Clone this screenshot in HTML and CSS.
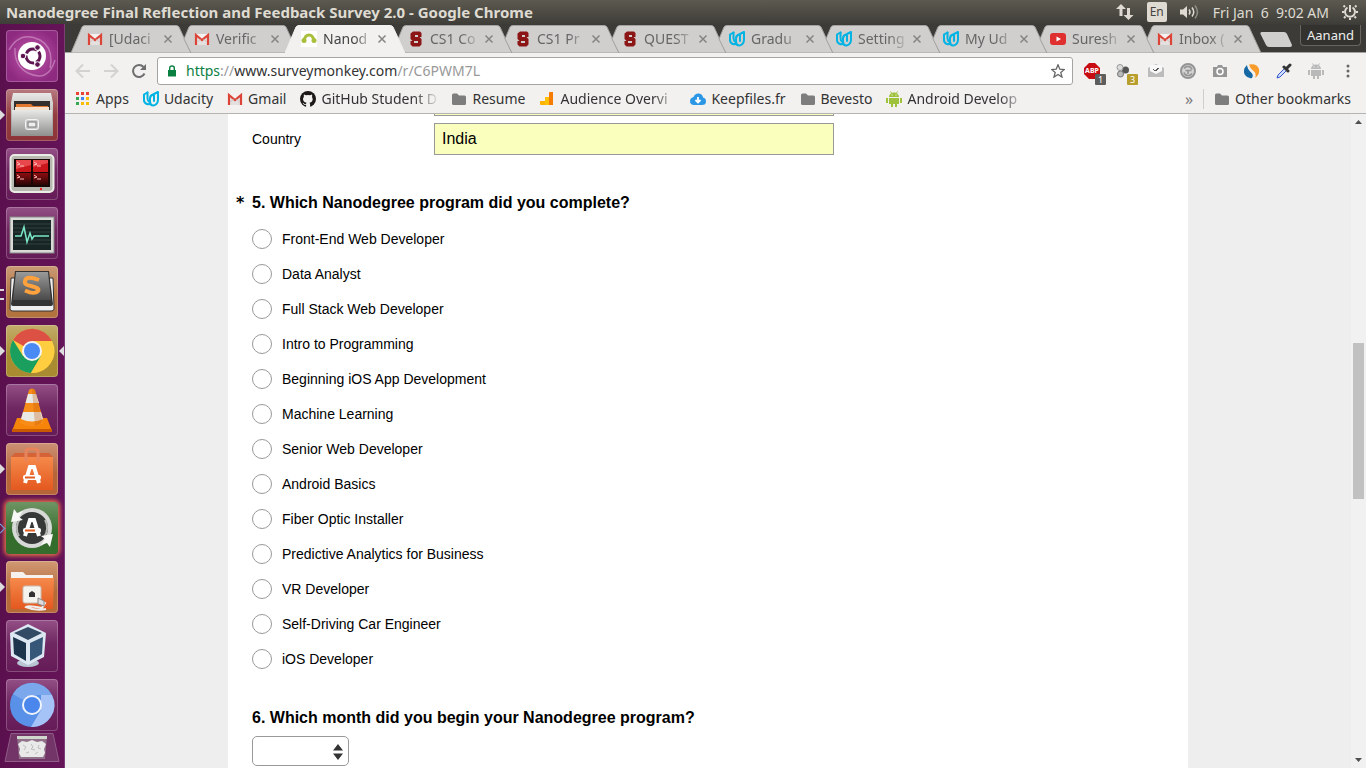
FILE: index.html
```html
<!DOCTYPE html>
<html lang="en">
<head>
<meta charset="utf-8">
<title>Nanodegree Final Reflection and Feedback Survey 2.0</title>
<link rel="stylesheet" href="styles.css">
</head>
<body>
<svg class="defs" aria-hidden="true">
  <defs>
    <linearGradient id="metal" x1="0" y1="0" x2="0" y2="1"><stop offset="0" stop-color="#e8e8e6"/><stop offset="1" stop-color="#8f8f8d"/></linearGradient>
    <linearGradient id="orange" x1="0" y1="0" x2="0" y2="1"><stop offset="0" stop-color="#f58a4b"/><stop offset="1" stop-color="#e4581f"/></linearGradient>
    <linearGradient id="redpane" x1="0" y1="0" x2="0" y2="1"><stop offset="0" stop-color="#8d0d10"/><stop offset="1" stop-color="#2a0505"/></linearGradient>
    <linearGradient id="keycap" x1="0" y1="0" x2="0" y2="1"><stop offset="0" stop-color="#9a9a9a"/><stop offset="1" stop-color="#4a4a4a"/></linearGradient>
  </defs>
  <symbol id="tab-full" viewBox="0 0 120 28" preserveAspectRatio="none"><path d="M0 28L11 2Q12 .5 14 .5H105Q107 .5 108 2L120 28Z"/></symbol>
  <symbol id="tab-cut" viewBox="0 0 120 28" preserveAspectRatio="none"><path d="M6 14L11 2Q12 .5 14 .5H105Q107 .5 108 2L120 28H13Z"/></symbol>
  <symbol id="gmail" viewBox="0 0 16 16"><path d="M1 3h14v11H1z" fill="#f4f1ef"/><path d="M3 5v9h10V5L8 9z" fill="#e4e0df"/><path d="M2 14V4l6 5 6-5v10" fill="none" stroke="#db4437" stroke-width="2.200"/><path d="M3.500 11l3-3M12.500 11l-3-3" stroke="#c9c5c4"/></symbol>
  <symbol id="udacity" viewBox="0 0 16 16"><g fill="none" stroke="#02b3e4" stroke-width="2" stroke-linecap="round" stroke-linejoin="round"><path d="M4.500 1.500L1 3.500v5.500q0 3 3 4 2 .7 3.500-1"/><path d="M4.500 1.500v5.500q0 3 2 4"/><path d="M10 3.500q-3 1-3 4v3.500q0 3.500 3.500 3.500 4.500-1 4.500-6V1l-4 2v7"/></g></symbol>
  <symbol id="stanford" viewBox="0 0 16 16"><path d="M5 .5h7l1.500 1.500V6H10V4H7v2h4.500l2 2v5.500l-2 2h-7l-2-2V10H6v2h4V10H4.500l-2-2V2.500z" fill="#8c1515"/></symbol>
  <symbol id="folder" viewBox="0 0 16 16"><path d="M1 4q0-1.500 1.500-1.500H6l2 2h5.500Q15 4.500 15 6v6.500q0 1.500-1.500 1.500h-11Q1 14 1 12.500z" fill="#7d7d7d"/></symbol>
  <symbol id="close" viewBox="0 0 10 10"><path d="M1.500 1.500l7 7M8.500 1.500l-7 7" fill="none" stroke="currentColor" stroke-width="1.500"/></symbol>
  <symbol id="android" viewBox="0 0 16 16"><path d="M3 6a5 4.500 0 0 1 10 0z"/><path d="M5.500 2L4.500.5M10.500 2l1-1.500" stroke="currentColor"/><path d="M3 7h10v6H3zM0 7h2v5H0zM14 7h2v5h-2zM5 13h2v3H5zM9 13h2v3H9z"/><path d="M5.500 4h1M9.500 4h1" stroke="#fff"/></symbol>
</svg>

<div class="desktop">
  <header class="panel">
    <h1 class="panel-title">Nanodegree Final Reflection and Feedback Survey 2.0 - Google Chrome</h1>
    <div class="indicators">
      <svg width="18" height="16" viewBox="0 0 18 16" fill="#dfdbd2"><path d="M5 0l5 5H6.500v7h-3V5H0zM12.500 16l-5-5H11V4h3v7h3.500z"/></svg>
      <span class="lang">En</span>
      <svg width="20" height="16" viewBox="0 0 20 16"><path d="M0 5.500h3L7 2v12l-4-3.500H0z" fill="#dfdbd2"/><g fill="none" stroke="#dfdbd2" stroke-width="1.500"><path d="M9 5.500q2 2.500 0 5M12 3.500q3.500 4.500 0 9"/><path d="M15 1.500q5 6.500 0 13" opacity=".45"/></g></svg>
      <time class="clock">Fri Jan&nbsp; 6&nbsp; 9:02 AM</time>
      <svg width="16" height="16" viewBox="0 0 16 16" fill="none" stroke="#dfdbd2"><path d="M5.500 3.500a5 5 0 1 0 5 0M8 1v7" stroke-width="2"/><path d="M3 3L1.500 1.500M13 3l1.500-1.500M2 8H0M14 8h2M3.500 12.500L2 14M12.500 12.500L14 14M8 14v2" stroke-width="2"/></svg>
    </div>
  </header>

  <nav class="launcher" aria-label="Launcher">
    <button class="tile ubuntu" aria-label="Dash"><svg viewBox="0 0 52 52"><g fill="none" stroke="#d79bcb" stroke-width="1.500" opacity=".6"><path d="M3 20Q14 0 34 10Q48 18 44 38M49 30Q42 53 22 43Q8 36 9 18"/></g><circle cx="26" cy="26" r="14" fill="#fff"/><circle cx="27" cy="26" r="7" fill="none" stroke="#5e1451" stroke-width="3" stroke-dasharray="12.700 2" stroke-dashoffset="5"/><g fill="#5e1451" stroke="#fff"><circle cx="17" cy="26" r="2.800"/><circle cx="31.500" cy="17.500" r="2.800"/><circle cx="31.500" cy="34.500" r="2.800"/></g></svg></button>
    <button class="tile files run" aria-label="Files"><svg viewBox="0 0 52 52"><path d="M7 4h38l2 10v33H5V14z" fill="url(#metal)"/><path d="M8 12h36v12H8z" fill="#33302d"/><path d="M10 15h15l2 2h15v6H10z" fill="#e37931"/><path d="M9 18h34v3H9z" fill="#f6e2cc"/><path d="M6 21h40v26H6z" fill="url(#metal)"/><rect x="19.500" y="30.500" width="13" height="10" rx="2" fill="#ccc" stroke="#f4f4f4"/><rect x="22" y="33" width="8" height="5" fill="#eee" stroke="#777"/></svg></button>
    <button class="tile" aria-label="Terminator"><svg viewBox="0 0 52 52"><rect x="4.500" y="7" width="43" height="37" rx="4" fill="#b7b9b0" stroke="#ecece6" stroke-width="2"/><path d="M8 11h36v28H8z" fill="#180707"/><path d="M10 12h15v12H10zM27 12h15v12H27z" fill="#c9171c"/><path d="M10 25h15v12H10zM27 25h15v12H27z" fill="url(#redpane)"/><path d="M10 12h15v5l-15 4zM27 12h15v3l-15 4z" fill="#e8484b"/><path d="M11 14l3 2-3 1M14 18h4M28 14l3 2-3 1M31 18h4M11 27l3 2-3 1M14 31h4M28 27l3 2-3 1M31 31h4" stroke="#ffb9b9" fill="none"/><circle cx="35" cy="41" r="1.200" fill="#e22"/></svg></button>
    <button class="tile" aria-label="System Monitor"><svg viewBox="0 0 52 52"><rect x="4" y="10" width="44" height="36" fill="#d9dad7" stroke="#888"/><path d="M7 13h38v30H7z" fill="#172524"/><path d="M7 17h38M7 21h38M7 25h38M7 33h38M7 37h38" stroke="#304340"/><path d="M9 29h6l3-9 3 15 3-9 2 6 2-3h15" fill="none" stroke="#7be8c6" stroke-width="1.500"/></svg></button>
    <button class="tile sublime run2" aria-label="Sublime Text"><svg viewBox="0 0 52 52"><path d="M5 12l-1 31q0 2 3 2h38q3 0 3-2l-1-31z" fill="#eee" stroke="#333"/><path d="M9 5h34l4 33q0 2-2 2H7q-2 0-2-2z" fill="#333"/><path d="M10 6h32l3 28H7z" fill="url(#keycap)"/><path d="M33 14q-13-5-14 1-1 4 6 5 9 2 7 5-3 4-13-.5" fill="none" stroke="#ffa13c" stroke-width="4"/></svg></button>
    <button class="tile chrome run focus" aria-label="Google Chrome"><svg viewBox="0 0 52 52"><circle cx="26" cy="26" r="22" fill="#ffcd40"/><path d="M26 26L7 15A22 22 0 0 1 46 16H26z" fill="#dd5144"/><path d="M7 15A22 22 0 0 0 25 48L35 31 26 26 17 31z" fill="#1b9f5f"/><path d="M46 16A22 22 0 0 1 25 48L35 31V16z" fill="#ffcd40"/><circle cx="26" cy="26" r="10" fill="#f4f4f4"/><circle cx="26" cy="26" r="8" fill="#4a8af4"/></svg></button>
    <button class="tile" aria-label="VLC"><svg viewBox="0 0 52 52"><path d="M11 34h30l5 13H6z" fill="#f58408"/><path d="M6 45h40v3H6z" fill="#c95a02"/><path d="M14 39L23 6q3-3 6 0l9 33q-12 7-24 0z" fill="#f78d18"/><path d="M22 10h8l3 9H19.500zM17 28h18l2 7q-11 5-22 0z" fill="#e9e9e5"/><path d="M26 5q3 0 3.500 2L36 35q1 5-7 7z" fill="#c25507" opacity=".3"/></svg></button>
    <button class="tile software run" aria-label="Software"><svg viewBox="0 0 52 52"><path d="M5 14h42v33H5z" fill="url(#orange)"/><path d="M5 14l4-4h34l4 4" fill="#d66237"/><path d="M20 18V9q0-3 3-3h6q3 0 3 3v9" fill="none" stroke="#e8845c" stroke-width="3"/><path d="M19 40l5-16h4l5 16" fill="none" stroke="#fff" stroke-width="4"/><rect x="17" y="32" width="18" height="5" rx="2" fill="#fff"/><path d="M19 34.500h10" stroke="#e15f23" stroke-width="2"/></svg></button>
    <button class="tile updater hollow" aria-label="Software Updater"><svg viewBox="0 0 52 52"><circle cx="26" cy="26" r="20" fill="#d7d9d6"/><circle cx="26" cy="26" r="16" fill="#373938"/><path d="M14 17A15 15 0 0 0 13 34M38 35A15 15 0 0 0 39 18" fill="none" stroke="#b5b8b4" stroke-width="2"/><path d="M5 20L8 7l3 4 6-2-4 6 4 3zM47 32l-3 13-3-4-6 2 4-6-4-3z" fill="#f8f8f6"/><path d="M19 34l5-16h4l5 16" fill="none" stroke="#fff" stroke-width="4"/><rect x="17" y="26" width="18" height="5" rx="2" fill="#fff"/><path d="M19 28.500h10" stroke="#e15f23" stroke-width="2"/></svg></button>
    <button class="tile network run" aria-label="Network folder"><svg viewBox="0 0 52 52"><path d="M5 11h12l3 3h27v9H5z" fill="#f6f1ec"/><path d="M4 17h44l-1 31H5z" fill="url(#orange)"/><rect x="17" y="25" width="18" height="17" rx="2" fill="#f4f3ee" stroke="#c9c0b7"/><path d="M23 36v-4l3-2 3 2v4z" fill="#333"/><path d="M34 39l5 3-3 5q-14-3-16-1 9 4 20 2" fill="none" stroke="#eee" stroke-width="2"/><path d="M32 37l6 3v5l-6-2z" fill="#ddd" stroke="#888"/></svg></button>
    <button class="tile" aria-label="VirtualBox"><svg viewBox="0 0 52 52"><ellipse cx="22" cy="43" rx="11" ry="4" fill="#b8c6d4"/><path d="M22 4l18 9-2 24-16 8L5 36 4 13z" fill="#dce7f2"/><path d="M22 7l14 6-14 7L8 13z" fill="#324a64"/><path d="M7 17l13 6v18L8 34z" fill="#1d344d"/><path d="M37 17l-13 6v18l12-7z" fill="#365777"/></svg></button>
    <button class="tile" aria-label="Chromium"><svg viewBox="0 0 52 52"><circle cx="26" cy="26" r="22" fill="#5a91e8"/><path d="M26 26L7 15A22 22 0 0 1 46 16H26z" fill="#7ba8ec"/><path d="M46 16A22 22 0 0 1 25 48L35 31V16z" fill="#a5c3f6"/><circle cx="26" cy="26" r="10" fill="#f0f4fb"/><circle cx="26" cy="26" r="8" fill="#4a86ec"/></svg></button>
    <button class="trash" aria-label="Trash"><svg viewBox="0 0 56 29"><path d="M7 .5h42l6 28H1z" fill="#733568" stroke="#8e5c86"/><path d="M13 3h30l-2 23H15z" fill="#a39aa0" opacity=".6"/><path d="M14 11l4-3 5 1 5-2 5 2 5-1 4 3-2 5 1 4-2 4H17l-2-4 1-4z" fill="#e9e9e9"/><path d="M19 12l3 2-2 3M27 11l2 3-2 2 4 1M35 12l-1 3 3 1M22 20l3-1M31 21l3-2" stroke="#bdbdbd" fill="none"/><path d="M13 4.500h30" stroke="#d2d7cd" stroke-width="3"/></svg></button>
  </nav>

  <div class="browser">
    <div class="tabstrip">
      <div class="tabs">
        <div class="tab"><svg class="shape"><use href="#tab-full"/></svg><svg class="icon"><use href="#gmail"/></svg><span class="tab-title">[Udaci</span><button class="x" aria-label="Close"><svg><use href="#close"/></svg></button></div>
        <div class="tab"><svg class="shape"><use href="#tab-cut"/></svg><svg class="icon"><use href="#gmail"/></svg><span class="tab-title">Verific</span><button class="x" aria-label="Close"><svg><use href="#close"/></svg></button></div>
        <div class="tab active"><svg class="shape"><use href="#tab-full"/></svg><svg class="icon" viewBox="0 0 16 16"><path d="M0 0h16v16H0z" fill="#fff"/><path d="M3 10Q4 4 8 4t5 6" fill="none" stroke="#a9bf3c" stroke-width="2.800"/><circle cx="3" cy="9.500" r="2.500" fill="#a9bf3c"/><circle cx="13" cy="9.500" r="2.500" fill="#a9bf3c"/></svg><span class="tab-title">Nanod</span><button class="x" aria-label="Close"><svg><use href="#close"/></svg></button></div>
        <div class="tab"><svg class="shape"><use href="#tab-cut"/></svg><svg class="icon"><use href="#stanford"/></svg><span class="tab-title">CS1 Co</span><button class="x" aria-label="Close"><svg><use href="#close"/></svg></button></div>
        <div class="tab"><svg class="shape"><use href="#tab-cut"/></svg><svg class="icon"><use href="#stanford"/></svg><span class="tab-title">CS1 Pr</span><button class="x" aria-label="Close"><svg><use href="#close"/></svg></button></div>
        <div class="tab"><svg class="shape"><use href="#tab-cut"/></svg><svg class="icon"><use href="#stanford"/></svg><span class="tab-title">QUEST</span><button class="x" aria-label="Close"><svg><use href="#close"/></svg></button></div>
        <div class="tab"><svg class="shape"><use href="#tab-cut"/></svg><svg class="icon"><use href="#udacity"/></svg><span class="tab-title">Gradu</span><button class="x" aria-label="Close"><svg><use href="#close"/></svg></button></div>
        <div class="tab"><svg class="shape"><use href="#tab-cut"/></svg><svg class="icon"><use href="#udacity"/></svg><span class="tab-title">Setting</span><button class="x" aria-label="Close"><svg><use href="#close"/></svg></button></div>
        <div class="tab"><svg class="shape"><use href="#tab-cut"/></svg><svg class="icon"><use href="#udacity"/></svg><span class="tab-title">My Ud</span><button class="x" aria-label="Close"><svg><use href="#close"/></svg></button></div>
        <div class="tab"><svg class="shape"><use href="#tab-cut"/></svg><svg class="icon" viewBox="0 0 16 16"><rect y="2" width="16" height="12" rx="3" fill="#e02f2f"/><path d="M6.500 5.500v5L11 8z" fill="#fff"/></svg><span class="tab-title">Suresh</span><button class="x" aria-label="Close"><svg><use href="#close"/></svg></button></div>
        <div class="tab"><svg class="shape"><use href="#tab-cut"/></svg><svg class="icon"><use href="#gmail"/></svg><span class="tab-title">Inbox (</span><button class="x" aria-label="Close"><svg><use href="#close"/></svg></button></div>
      </div>
      <button class="newtab" aria-label="New tab"><svg width="32" height="15" viewBox="0 0 32 15"><path d="M2 0h22q2 0 3 2l5 11q0 2-2 2H9q-2 0-3-2L.5 2Q0 0 2 0z" fill="#d0cfce"/></svg></button>
      <button class="profile">Aanand</button>
    </div>

    <div class="toolbar">
      <button class="nav" aria-label="Back"><svg width="16" height="16" viewBox="0 0 16 16"><path d="M8 1.500L1.500 8 8 14.500M2 8h13" class="dim"/></svg></button>
      <button class="nav" aria-label="Forward"><svg width="16" height="16" viewBox="0 0 16 16"><path d="M8 1.500L14.500 8 8 14.500M14 8H1" class="dim"/></svg></button>
      <button class="nav" aria-label="Reload"><svg width="16" height="16" viewBox="0 0 16 16"><path d="M13.500 10.500A6 6 0 1 1 12.500 4" fill="none" stroke="#6e6e6e" stroke-width="2"/><path d="M15 1v6H9z" fill="#6e6e6e"/></svg></button>
      <div class="omnibox">
        <svg width="8" height="12" viewBox="0 0 8 12"><path d="M0 5h8v6.500H0z" fill="#0b8043"/><path d="M1.700 6V3q0-2 2.300-2t2.300 2v3" fill="none" stroke="#0b8043" stroke-width="1.400"/></svg>
        <div class="url"><span class="secure">https</span><span class="faint">://</span>www.surveymonkey.com<span class="faint">/r/C6PWM7L</span></div>
        <button class="nav" aria-label="Bookmark"><svg width="14" height="14" viewBox="0 0 14 14"><path d="M7 .8l1.800 4.400 4.600.3-3.600 3 1.200 4.600-4-2.600-4 2.600 1.200-4.600-3.600-3 4.600-.3z" fill="none" stroke="#666" stroke-width="1.300"/></svg></button>
      </div>
      <div class="extensions">
        <button class="ext" aria-label="Ad blocker"><svg viewBox="0 0 16 16"><path d="M5 0h6l5 5v6l-5 5H5l-5-5V5z" fill="#c70d12"/></svg><span class="abp">ABP</span><span class="badge">1</span></button>
        <button class="ext" aria-label="Blocked trackers"><svg viewBox="0 0 16 16"><circle cx="9.500" cy="7" r="3.500" fill="#555"/><circle cx="4" cy="4.500" r="3" fill="#ddd" stroke="#999"/><circle cx="4.500" cy="11" r="3" fill="#bbb" stroke="#777"/></svg><span class="badge gold">3</span></button>
        <button class="ext" aria-label="Mail"><svg viewBox="0 0 16 16"><path d="M0 5l8-4 8 4v9H0z" fill="#bbb"/><path d="M2 2h12v7l-6 3-6-3z" fill="#f7f7f7"/><path d="M5 6l2 2 3-3M8 8l3-3" fill="none" stroke="#555"/><path d="M0 7l8 4 8-4v7H0z" fill="#bcbcbc"/></svg></button>
        <button class="ext" aria-label="Sync"><svg viewBox="0 0 16 16"><circle cx="8" cy="8" r="7" fill="#d4d4d4" stroke="#949494" stroke-width="2"/><path d="M12 10.500a4.500 4.500 0 0 1-8-1M4 5.500a4.500 4.500 0 0 1 8 1M5.500 7.500h6M8 7.500v3.500" fill="none" stroke="#949494" stroke-width="1.600"/></svg></button>
        <button class="ext" aria-label="Camera"><svg viewBox="0 0 16 16"><path d="M1 4h4l1-2h4l1 2h4v10H1z" fill="#969696"/><circle cx="8" cy="8.500" r="3" fill="none" stroke="#fff" stroke-width="1.500"/></svg></button>
        <button class="ext" aria-label="Similar pages"><svg viewBox="0 0 16 16"><path d="M3 2q-5 5-2 10 3 4 7 3 2-3-1-6T3 2z" fill="#1769a5"/><path d="M5 1.500Q13 0 15 6q1 6-4 9 2-5-2-7.500-3-2-4-6z" fill="#f89c2b"/><path d="M4 1.500q0 5 4 7.500 3 3 2 6.500" fill="none" stroke="#f2f1f0" stroke-width="1.500"/></svg></button>
        <button class="ext" aria-label="Colour picker"><svg viewBox="0 0 16 16"><path d="M1 15l1-3 7-7 2 2-7 7z" fill="#cfdcff" stroke="#3558c8"/><path d="M8 4l4 4M10 6l4-4" stroke="#333" stroke-width="3" stroke-linecap="round"/></svg></button>
        <button class="ext grey-android" aria-label="Android"><svg><use href="#android"/></svg></button>
        <button class="ext menu" aria-label="Menu"><svg viewBox="0 0 16 16" fill="#666"><circle cx="8" cy="3" r="1.500"/><circle cx="8" cy="8" r="1.500"/><circle cx="8" cy="13" r="1.500"/></svg></button>
      </div>
    </div>

    <nav class="bookmarks" aria-label="Bookmarks">
      <a href="#apps"><svg class="icon" viewBox="0 0 16 16"><path d="M1 1h3v3H1zM6 1h3v3H6zM11 1h3v3h-3z" fill="#ea4335"/><path d="M1 6h3v3H1zM1 11h3v3H1z" fill="#34a853"/><path d="M6 6h3v3H6z" fill="#4285f4"/><path d="M6 11h3v3H6zM11 6h3v3h-3zM11 11h3v3h-3z" fill="#fbbc05"/></svg><span>Apps</span></a>
      <a href="#udacity-link"><svg class="icon"><use href="#udacity"/></svg><span>Udacity</span></a>
      <a href="#gmail-link"><svg class="icon"><use href="#gmail"/></svg><span>Gmail</span></a>
      <a href="#github"><svg class="icon" viewBox="0 0 16 16"><circle cx="8" cy="8" r="8" fill="#1b1817"/><path d="M4 3.500l2 .7q2-.5 4 0l2-.7q.5 1.500 0 2.500 1.300 2 .3 4-1 1.500-2.800 1.700.6.600.6 1.600V16h-4v-2q-2 .3-2.800-1.300l-.9-1q1.300 0 1.800 1 .8.800 1.900.3 0-1 .4-1.300Q3 11 3 8q0-1 .9-2-.4-1 .1-2.500z" fill="#f2f1f0"/></svg><span class="fade">GitHub Student D</span></a>
      <a href="#resume"><svg class="icon"><use href="#folder"/></svg><span>Resume</span></a>
      <a href="#audience"><svg class="icon" viewBox="0 0 16 16"><path d="M10 2q0-1 1-1h3v13h-4z" fill="#f57c00"/><path d="M6 6h4v8H6z" fill="#ffc107"/><path d="M1 10h5v4H2q-1 0-1-1z" fill="#ffb300"/></svg><span class="fade">Audience Overvi</span></a>
      <a href="#keepfiles"><svg class="icon" viewBox="0 0 16 16"><path d="M4 14q-4 0-4-4 0-3 3.500-4Q5 2 9 2.500q3.500.5 4 4 3 .5 3 4 0 3.500-4 3.500z" fill="#2e97e5"/><path d="M8 6v5M5.500 9L8 11.500 10.500 9" fill="none" stroke="#fff" stroke-width="1.800"/></svg><span>Keepfiles.fr</span></a>
      <a href="#bevesto"><svg class="icon"><use href="#folder"/></svg><span>Bevesto</span></a>
      <a href="#android-link"><svg class="icon green-android"><use href="#android"/></svg><span class="fade">Android Develop</span></a>
      <button class="more" aria-label="More bookmarks">»</button>
      <a class="other" href="#other"><svg class="icon"><use href="#folder"/></svg><span>Other bookmarks</span></a>
    </nav>

    <div class="viewport">
      <main class="survey">
        <form>
          <div class="field clipped"><input type="text" aria-label="ZIP"></div>
          <div class="field"><label for="country">Country</label><input id="country" type="text" value="India"></div>

          <fieldset>
            <legend><span class="star">*</span>5. Which Nanodegree program did you complete?</legend>
            <label class="option"><input type="radio" name="program">Front-End Web Developer</label>
            <label class="option"><input type="radio" name="program">Data Analyst</label>
            <label class="option"><input type="radio" name="program">Full Stack Web Developer</label>
            <label class="option"><input type="radio" name="program">Intro to Programming</label>
            <label class="option"><input type="radio" name="program">Beginning iOS App Development</label>
            <label class="option"><input type="radio" name="program">Machine Learning</label>
            <label class="option"><input type="radio" name="program">Senior Web Developer</label>
            <label class="option"><input type="radio" name="program">Android Basics</label>
            <label class="option"><input type="radio" name="program">Fiber Optic Installer</label>
            <label class="option"><input type="radio" name="program">Predictive Analytics for Business</label>
            <label class="option"><input type="radio" name="program">VR Developer</label>
            <label class="option"><input type="radio" name="program">Self-Driving Car Engineer</label>
            <label class="option"><input type="radio" name="program">iOS Developer</label>
          </fieldset>

          <div class="question">
            <label class="heading" for="month">6. Which month did you begin your Nanodegree program?</label>
            <div class="select">
              <select id="month"><option></option></select>
              <svg width="10" height="16" viewBox="0 0 10 16" fill="#333"><path d="M5 0l5 6.500H0zM5 16l5-6.500H0z"/></svg>
            </div>
          </div>
        </form>
      </main>
      <div class="scrollbar">
        <svg width="7" height="4" viewBox="0 0 7 4"><path d="M3.500 0L7 4H0z" fill="#505050"/></svg>
        <div class="track"><div class="thumb"></div></div>
        <svg width="7" height="4" viewBox="0 0 7 4"><path d="M3.500 4L7 0H0z" fill="#505050"/></svg>
      </div>
    </div>
  </div>
</div>
</body>
</html>
```
FILE: styles.css
```css
* { box-sizing: border-box; }

body {
  margin: 0;
  font-family: "Noto Sans", "Open Sans", sans-serif;
  font-size: 14px;
  color: #333;
}

button {
  padding: 0;
  border: 0;
  background: none;
  font: inherit;
  color: inherit;
}

svg { display: block; flex: none; }
.defs { position: absolute; width: 0; height: 0; }
.icon { width: 16px; height: 16px; }

.desktop {
  display: grid;
  grid-template: 24px minmax(0, 1fr) / 65px minmax(0, 1fr);
  height: 100vh;
  overflow: hidden;
  background: #3c3b37;
}

/* Top panel */
.panel {
  grid-column: 1 / -1;
  display: flex;
  align-items: center;
  justify-content: space-between;
  padding: 0 8px 0 6px;
  background: linear-gradient(#5c5a50, #3e3d38);
  color: #dfdbd2;
}
.panel-title { margin: 0; font-size: 15px; line-height: 20px; font-weight: 700; white-space: nowrap; }
.indicators { display: flex; align-items: center; gap: 13px; }
.lang {
  width: 20px;
  border-radius: 2px;
  background: #dfdbd2;
  color: #45433d;
  font-size: 12px;
  line-height: 20px;
  text-align: center;
}
.clock { white-space: nowrap; }

/* Launcher */
.launcher {
  display: flex;
  flex-direction: column;
  align-items: center;
  gap: 7px;
  padding-top: 6px;
  border-right: 1px solid #7c3d72;
  background: linear-gradient(90deg, #5b104e, #651457);
  overflow: hidden;
}
.tile {
  position: relative;
  flex: none;
  width: 52px;
  height: 52px;
  border-radius: 4px;
  background: linear-gradient(#935086, #702862 45%, #651b57);
  box-shadow: inset 0 0 0 1px rgba(255, 255, 255, .22);
}
.ubuntu { background: radial-gradient(#c05aae, #8e2a80 75%); }
.files { background: linear-gradient(#b77b80, #943d41 50%, #8c3438); }
.sublime { background: linear-gradient(#c99a76, #b3733f 60%); }
.chrome { background: linear-gradient(#c3ad6b, #a98c31 60%); }
.software { background: linear-gradient(#cd9175, #b66438 60%); }
.updater { background: linear-gradient(#6f9465, #356e2c 60%); box-shadow: 0 0 4px 2px #e5704a; }
.network { background: linear-gradient(#d09974, #b56a38 60%); }
.run::before, .run2::before, .focus::after, .hollow::before {
  content: "";
  position: absolute;
  left: -6px;
  top: 21px;
  border: 5px solid transparent;
  border-left-color: #ddd;
  border-right-width: 0;
}
.run2::before { top: 23px; width: 4px; height: 7px; border: solid #ddd; border-width: 2px 0; }
.hollow::before { width: 6px; height: 6px; top: 23px; left: -9px; border: solid #6fa5d8; border-width: 1px 1px 0 0; transform: rotate(45deg); }
.focus::after { left: auto; right: -6px; border-width: 5px 5px 5px 0; border-right-color: #ddd; }
.trash { width: 56px; margin-top: -5px; }

/* Tab strip */
.browser { display: flex; flex-direction: column; min-width: 0; min-height: 0; }
.tabstrip {
  display: flex;
  align-items: flex-start;
  padding: 1px 5px 0 6px;
  background: #3c3b37;
  border-bottom: 1px solid #a3a2a0;
}
.tabs { display: flex; flex: 0 1 1190px; min-width: 0; margin-bottom: -1px; }
.tab {
  position: relative;
  flex: 1 1 0;
  display: flex;
  align-items: center;
  gap: 6px;
  min-width: 0;
  height: 28px;
  padding: 0 18px 0 16px;
  margin-left: -13px;
  color: #666;
}
.tab:first-child { margin-left: 0; }
.tab > :not(.shape) { position: relative; }
.shape {
  position: absolute;
  inset: 0;
  width: 100%;
  height: 100%;
  fill: #d0cfce;
  stroke: #a3a2a0;
}
.active { z-index: 1; color: #444; }
.active .shape { fill: #f2f1f0; stroke: #f2f1f0; }
.tab-title {
  flex: 1;
  min-width: 0;
  overflow: hidden;
  white-space: nowrap;
  line-height: 20px;
  mask-image: linear-gradient(90deg, #000 65%, rgba(0, 0, 0, .15));
}
.x { color: #858483; }
.x svg { width: 10px; height: 10px; }
.newtab { margin: 7px 0 0 -1px; }
.profile {
  margin-left: auto;
  width: 61px;
  border: 1px solid #67655e;
  border-top: 0;
  border-radius: 0 0 4px 4px;
  background: #33322f;
  color: #eee;
  font-size: 13px;
  line-height: 20px;
}

/* Toolbar */
.toolbar {
  display: flex;
  align-items: center;
  padding: 4px 10px 0 10px;
  gap: 12px;
  background: #f2f1f0;
}
.dim { fill: none; stroke: #d3d2d1; stroke-width: 2; }
.omnibox {
  flex: 1;
  display: flex;
  align-items: center;
  height: 28px;
  margin-left: -2px;
  padding: 0 7px 0 10px;
  gap: 10px;
  border: 1px solid #a5a4a3;
  border-radius: 3px;
  background: #fff;
}
.url { flex: 1; white-space: nowrap; line-height: 20px; }
.secure { color: #0b8043; }
.faint { color: #999; }
.extensions { display: flex; gap: 16px; margin-left: -1px; }
.ext { position: relative; width: 16px; height: 16px; }
.ext svg { width: 16px; height: 16px; }
.abp {
  position: absolute;
  inset: 0;
  color: #fff;
  font-size: 7px;
  font-weight: 700;
  line-height: 16px;
  text-align: center;
}
.badge {
  position: absolute;
  left: 11px;
  top: 11px;
  width: 11px;
  border-radius: 1px;
  background: #5d5d5d;
  color: #fff;
  font-size: 9px;
  line-height: 11px;
  text-align: center;
}
.gold { background: #b89f2d; }
.grey-android { color: #b9b9b9; fill: #b9b9b9; }
.green-android { color: #9fc23c; fill: #9fc23c; }

/* Bookmarks bar */
.bookmarks {
  display: flex;
  align-items: center;
  gap: 14px;
  height: 29px;
  padding: 0 15px 0 10px;
  border-bottom: 1px solid #b5b4b3;
  background: #f2f1f0;
}
.bookmarks a {
  display: flex;
  align-items: center;
  gap: 5px;
  color: #333;
  text-decoration: none;
  white-space: nowrap;
  line-height: 20px;
}
.fade {
  width: 116px;
  overflow: hidden;
  mask-image: linear-gradient(90deg, #000 80%, rgba(0, 0, 0, .1));
}
.more { margin-left: auto; color: #777; font-size: 16px; line-height: 20px; }
.bookmarks .other { border-left: 1px solid #cfcecd; padding-left: 10px; margin-left: -4px; }

/* Survey page */
.viewport { flex: 1; display: flex; min-height: 0; overflow: hidden; background: #eee; }
.survey {
  flex: 0 1 960px;
  margin: 0 auto;
  padding: 0 24px;
  background: #fff;
  color: #000;
  font-family: "Liberation Sans", Arial, sans-serif;
  font-size: 14px;
  overflow: hidden;
}
.field { display: flex; align-items: center; margin-bottom: 7px; }
.field label { width: 182px; }
.field input {
  width: 400px;
  height: 32px;
  padding: 0 7px;
  border: 1px solid #999;
  background: #faffbd;
  font: 16px/20px "Liberation Sans", Arial, sans-serif;
  color: #000;
}
.clipped { margin-top: -30px; padding-left: 182px; }
fieldset { margin: 38px 0 0; padding: 0; border: 0; }
legend, .heading {
  display: block;
  margin-bottom: 8px;
  padding: 0;
  font-size: 16px;
  line-height: 20px;
  font-weight: 700;
}
.star { display: inline-block; width: 16px; margin-left: -16px; font-family: "DejaVu Sans", sans-serif; line-height: 16px; }
.option { display: flex; align-items: center; gap: 10px; height: 35px; }
.option input {
  appearance: none;
  width: 20px;
  height: 20px;
  margin: 0;
  border: 1px solid #999;
  border-radius: 50%;
  background: #fff;
}
.question { margin-top: 32px; }
.select { position: relative; width: 97px; }
.select select {
  appearance: none;
  display: block;
  width: 100%;
  height: 30px;
  border: 1px solid #999;
  border-radius: 5px;
  background: #fff;
}
.select svg { position: absolute; right: 6px; top: 8px; pointer-events: none; }

.scrollbar {
  display: flex;
  flex-direction: column;
  align-items: center;
  width: 15px;
  padding: 6px 0;
  background: #f1f1f1;
}
.track { flex: 1; display: grid; grid-template-rows: 219fr 156fr 259fr; width: 11px; }
.thumb { grid-row: 2; background: #c1c1c1; }
```
